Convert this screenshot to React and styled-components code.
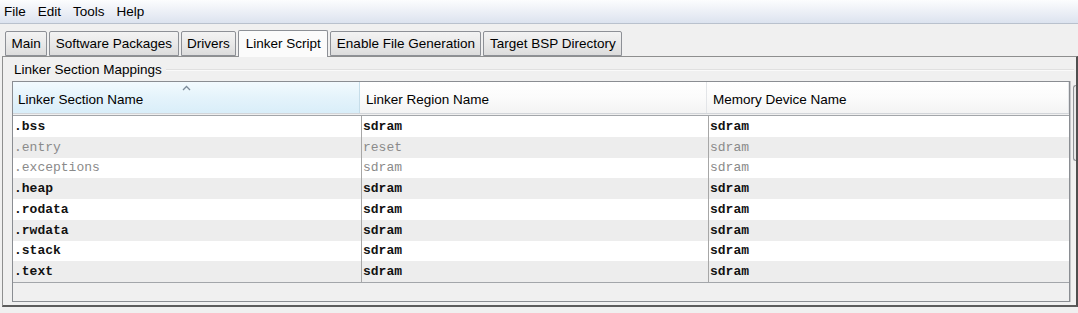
import React from 'react'
import styled, { createGlobalStyle } from 'styled-components'

const GlobalStyle = createGlobalStyle`
  html, body {
    margin: 0;
    padding: 0;
    background: #f4f4f4;
  }
`

const Window = styled.div`
  width: 1078px;
  height: 313px;
  overflow: hidden;
  background: #f0f0f0;
  font-family: 'Liberation Sans', Arial, sans-serif;
  font-size: 13.5px;
  color: #000;
  display: flex;
  flex-direction: column;
`

const MenuBar = styled.div`
  height: 23px;
  display: flex;
  align-items: center;
  gap: 12px;
  padding-left: 4px;
  background: linear-gradient(#fcfdfe, #eef1f7 45%, #dce3ef);
  border-bottom: 1px solid #b9c1cd;
`

const MenuItem = styled.span`
  line-height: 1;
`

const Content = styled.div`
  flex: 1;
  display: flex;
  flex-direction: column;
  padding-top: 5px;
`

const TabStrip = styled.div`
  display: flex;
  align-items: flex-end;
  height: 27px;
  margin-left: 5px;
  gap: 2px;
  position: relative;
  z-index: 1;
`

const Tab = styled.div`
  height: ${p => (p.$active ? '27px' : '25px')};
  margin-bottom: ${p => (p.$active ? '-1px' : '0')};
  padding: ${p => (p.$active ? '0 6.5px 2px' : '0 5.5px')};
  box-sizing: border-box;
  display: flex;
  align-items: center;
  border: 1px solid #8d9096;
  border-bottom: ${p => (p.$active ? 'none' : '1px solid #8d9096')};
  border-radius: 2px 2px 0 0;
  background: ${p =>
    p.$active ? '#fbfbfb' : 'linear-gradient(#f3f3f3, #e9e9e9 50%, #dcdcdc)'};
  white-space: nowrap;
`

const Panel = styled.div`
  margin-left: 2px;
  height: 251px;
  box-sizing: border-box;
  border: 1px solid #8e8f8f;
  border-right: 2px solid #4f4f4f;
  border-bottom: 2px solid #5c5c5c;
  background: #f0f0f0;
  display: flex;
  flex-direction: column;
`

const GroupTitle = styled.div`
  display: flex;
  align-items: center;
  gap: 4px;
  height: 15px;
  margin: 5px 2px 0 11px;
  white-space: nowrap;
  &::after {
    content: '';
    flex: 1;
    height: 1px;
    background: #e0e0e0;
    border-bottom: 1px solid #fafafa;
  }
`

const ScrollRow = styled.div`
  display: flex;
  margin: 4px 0 0 9px;
  height: 221px;
`

const Frame = styled.div`
  flex: 1;
  border: 1px solid #8a8d92;
  display: flex;
  flex-direction: column;
  background: #f0f0f0;
`

const HeaderRow = styled.div`
  display: grid;
  grid-template-columns: 347px 347px 1fr;
  height: 31px;
  border-bottom: 1px solid #d2d5d9;
  margin-bottom: 1px;
`

const HeaderCell = styled.div`
  position: relative;
  display: flex;
  align-items: center;
  padding-left: ${p => (p.$first ? '5px' : '6px')};
  padding-top: 3px;
  border-right: 1px solid ${p => (p.$sorted ? '#c6dde9' : '#e3e5e8')};
  background: ${p =>
    p.$sorted
      ? 'linear-gradient(#f2fafe, #e4f3fb 50%, #d9eef9)'
      : 'linear-gradient(#ffffff, #fbfbfb 50%, #f3f3f3)'};
`

const SortArrow = styled.svg`
  position: absolute;
  left: 169px;
  top: 3px;
`

const Body = styled.div`
  border-top: 1px solid #a3a6aa;
  border-bottom: 1px solid #a3a6aa;
`

const Row = styled.div`
  display: grid;
  grid-template-columns: 348px 347px 1fr;
  height: 20.75px;
  align-items: center;
  background: ${p => (p.$odd ? '#ededed' : '#ffffff')};
  font-family: 'Liberation Mono', 'Courier New', monospace;
  font-size: 13px;
  font-weight: ${p => (p.$disabled ? 'normal' : 'bold')};
  color: ${p => (p.$disabled ? '#8a8a8a' : '#111')};
`

const Cell = styled.div`
  padding-left: 1px;
  height: 100%;
  display: flex;
  align-items: center;
  border-left: ${p => (p.$divider ? '1px solid #a7a7a7' : 'none')};
  white-space: nowrap;
`

const ScrollTrack = styled.div`
  width: 6px;
  border-left: 1px solid #c4c6c9;
  padding-top: 4px;
  box-sizing: border-box;
`

const Thumb = styled.div`
  height: 74px;
  margin-left: 2px;
  border: 1px solid #8f9296;
  border-right: none;
  border-radius: 4px 0 0 4px;
  background: #e8e8e8;
`

const tabs = [
  'Main',
  'Software Packages',
  'Drivers',
  'Linker Script',
  'Enable File Generation',
  'Target BSP Directory',
]

const mappings = [
  { section: '.bss', region: 'sdram', device: 'sdram' },
  { section: '.entry', region: 'reset', device: 'sdram', disabled: true },
  { section: '.exceptions', region: 'sdram', device: 'sdram', disabled: true },
  { section: '.heap', region: 'sdram', device: 'sdram' },
  { section: '.rodata', region: 'sdram', device: 'sdram' },
  { section: '.rwdata', region: 'sdram', device: 'sdram' },
  { section: '.stack', region: 'sdram', device: 'sdram' },
  { section: '.text', region: 'sdram', device: 'sdram' },
]

function App() {
  return (
    <Window>
      <GlobalStyle />
      <MenuBar>
        {['File', 'Edit', 'Tools', 'Help'].map(item => (
          <MenuItem key={item}>{item}</MenuItem>
        ))}
      </MenuBar>
      <Content>
        <TabStrip>
          {tabs.map(tab => (
            <Tab key={tab} $active={tab === 'Linker Script'}>
              {tab}
            </Tab>
          ))}
        </TabStrip>
        <Panel>
          <GroupTitle>Linker Section Mappings</GroupTitle>
          <ScrollRow>
            <Frame>
              <HeaderRow>
                <HeaderCell $first $sorted>
                  <SortArrow width="9" height="6" viewBox="0 0 9 6">
                    <polyline
                      points="1,5 4.5,1.5 8,5"
                      fill="none"
                      stroke="#7b8a99"
                      strokeWidth="1.3"
                    />
                  </SortArrow>
                  Linker Section Name
                </HeaderCell>
                <HeaderCell>Linker Region Name</HeaderCell>
                <HeaderCell>Memory Device Name</HeaderCell>
              </HeaderRow>
              <Body>
                {mappings.map(({ section, region, device, disabled }, i) => (
                  <Row key={section} $odd={i % 2 === 1} $disabled={disabled}>
                    <Cell>{section}</Cell>
                    <Cell $divider>{region}</Cell>
                    <Cell $divider>{device}</Cell>
                  </Row>
                ))}
              </Body>
            </Frame>
            <ScrollTrack>
              <Thumb />
            </ScrollTrack>
          </ScrollRow>
        </Panel>
      </Content>
    </Window>
  )
}

export default App
